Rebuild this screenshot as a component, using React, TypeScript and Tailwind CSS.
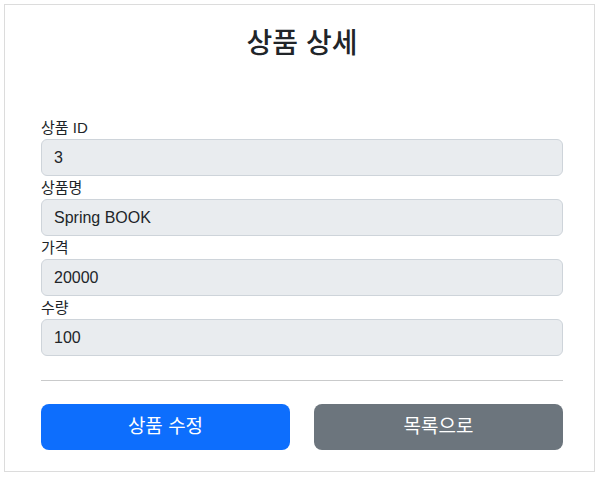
export default function App() {
  const fields = [
    { label: '상품 ID', value: '3' },
    { label: '상품명', value: 'Spring BOOK' },
    { label: '가격', value: '20000' },
    { label: '수량', value: '100' },
  ]

  return (
    <div
      className="p-1 bg-white text-[#212529]"
      style={{ fontFamily: '"Liberation Sans", "Noto Sans CJK KR", sans-serif' }}
    >
      <div className="w-[591px] border border-[#dcdcdc] pt-[23px] pb-[21px] pl-[36px] pr-[31px]">
        {/* Title */}
        <h2 className="h-[32px] leading-[32px] text-center text-[28px] font-medium">상품 상세</h2>

        <div className="mt-[56px]">
          {fields.map((f) => (
            <div key={f.label}>
              <label className="block h-[23px] leading-[23px] text-[15px]">{f.label}</label>
              <input
                type="text"
                value={f.value}
                readOnly
                className="block w-full h-[37px] px-3 text-[16px] bg-[#e9ecef] border border-[#ced4da] rounded-[6px] text-[#212529] outline-none"
              />
            </div>
          ))}
        </div>

        <hr className="mt-[24px] mb-[23px] border-0 border-t border-[#c9cacb]" />

        <div className="grid grid-cols-2 gap-6">
          <button className="h-[46px] rounded-[8px] bg-[#0d6efd] text-white text-[19px]">상품 수정</button>
          <button className="h-[46px] rounded-[8px] bg-[#6c757d] text-white text-[19px]">목록으로</button>
        </div>
      </div>
    </div>
  )
}
